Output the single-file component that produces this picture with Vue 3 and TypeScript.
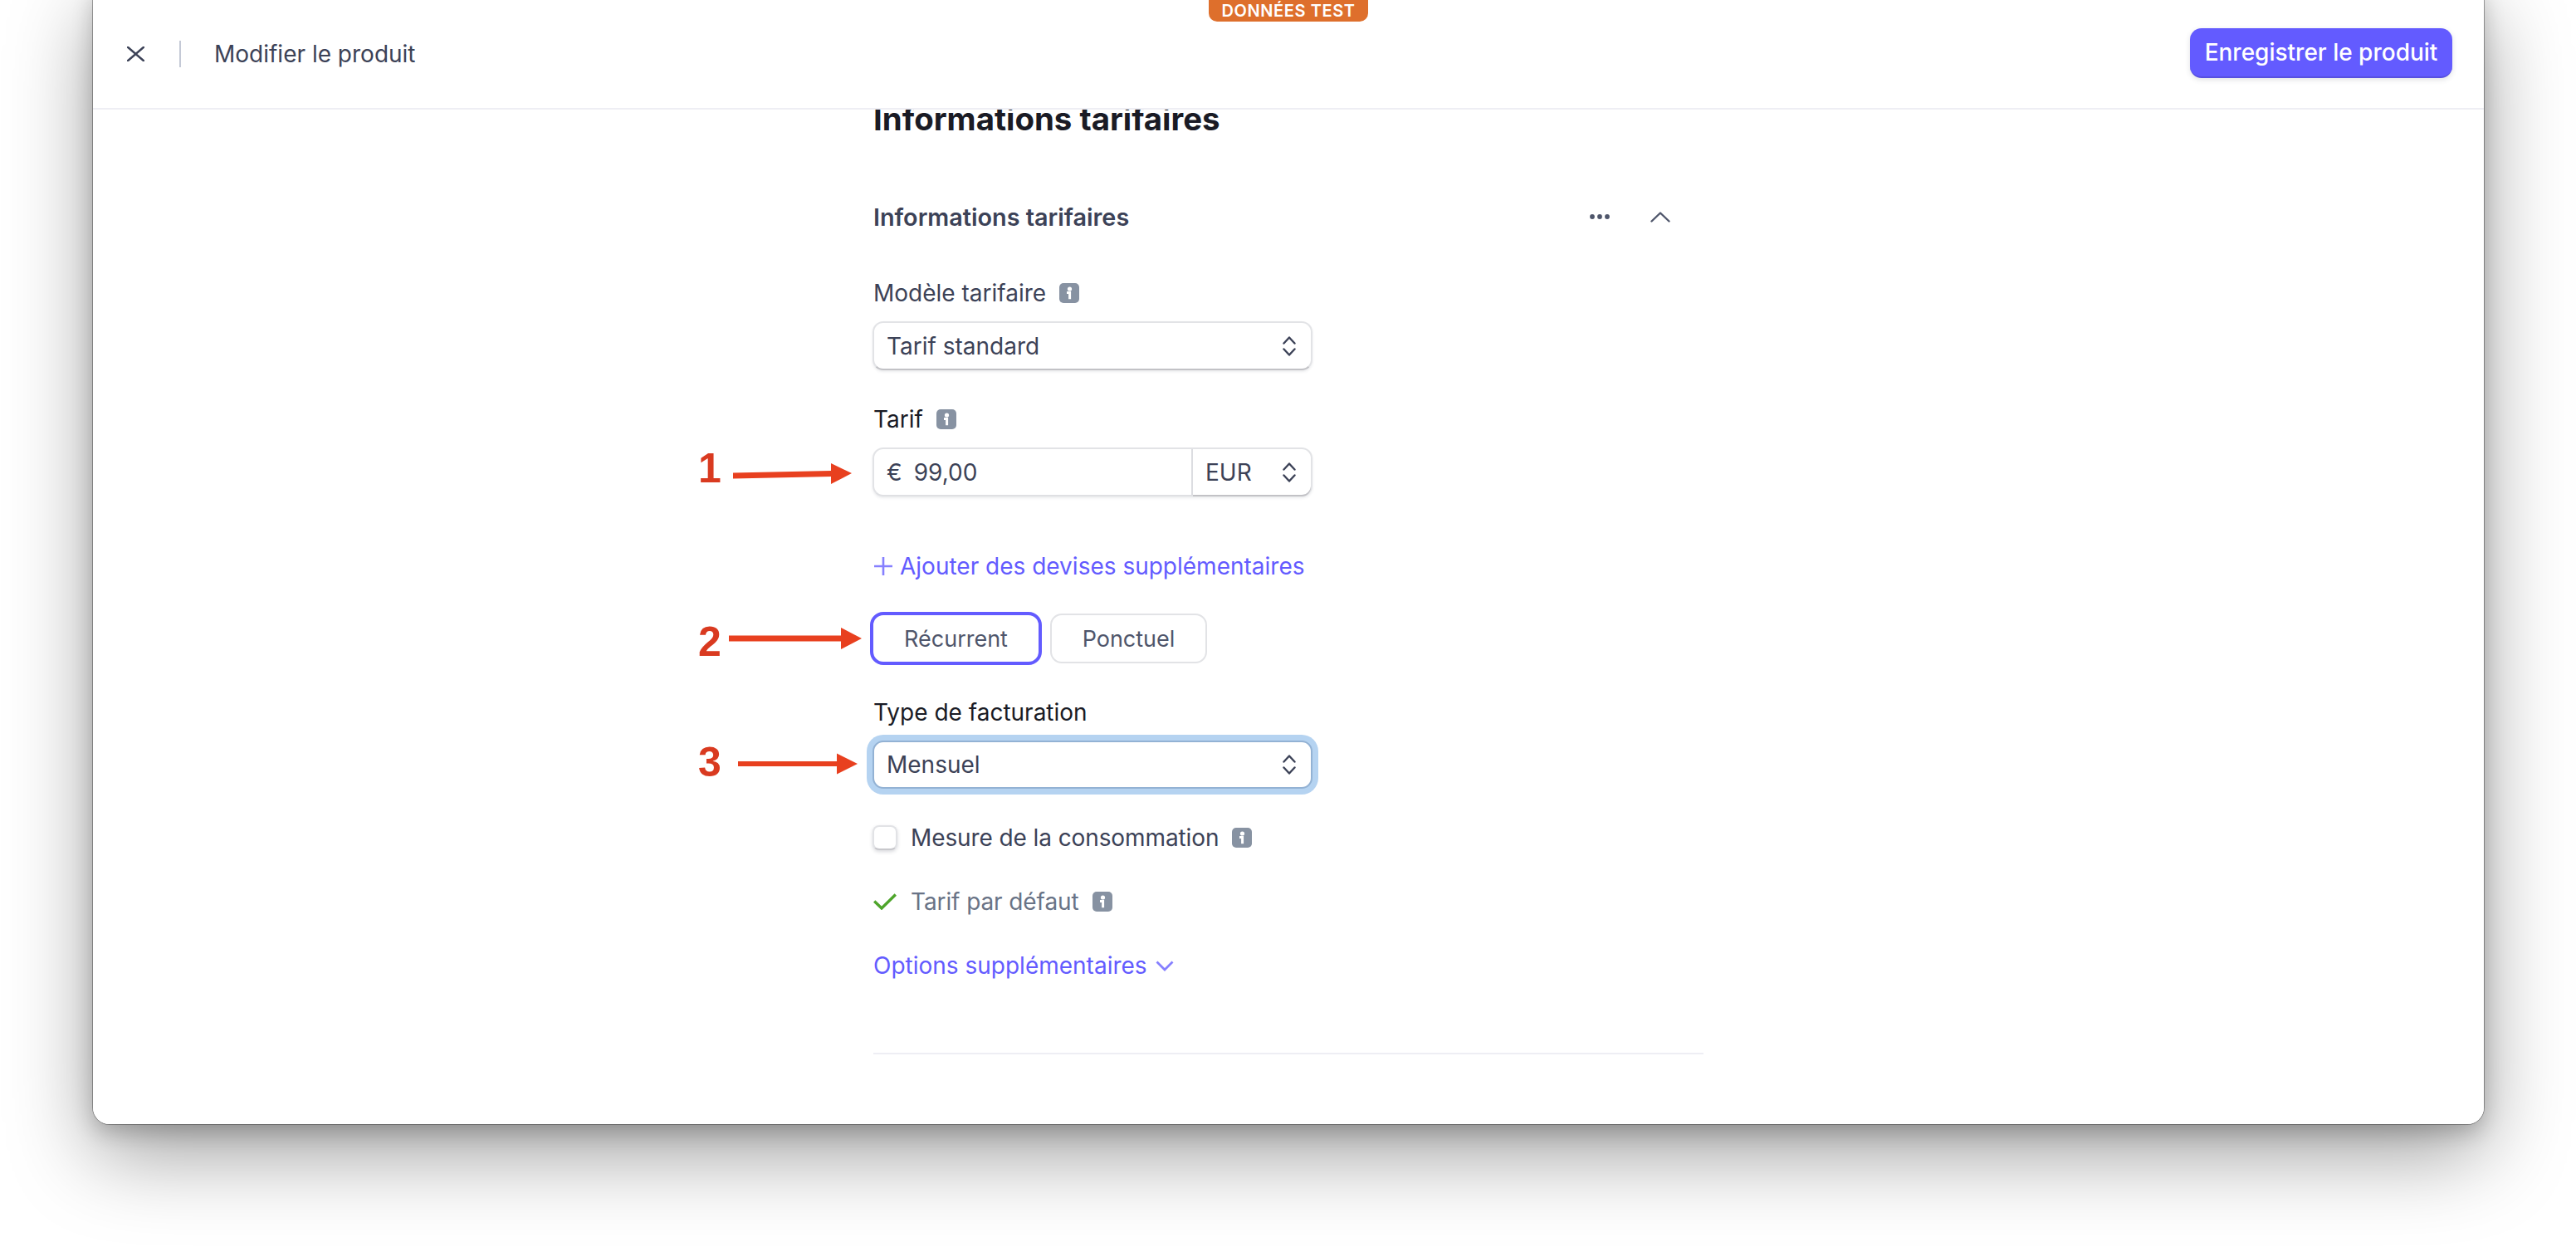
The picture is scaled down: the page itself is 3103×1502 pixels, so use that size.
<template>
  <div class="page">
    <div class="window">
      <header class="topbar">
        <div class="topbar__left">
          <svg class="close" viewBox="0 0 20 20" fill="none" preserveAspectRatio="none">
            <path d="M1 1l18 18M19 1L1 19" stroke="#3c4257" stroke-width="2.5" stroke-linecap="round" />
          </svg>
          <span class="topbar__sep"></span>
          <span class="topbar__title">Modifier le produit</span>
        </div>
        <span class="test-badge">DONNÉES TEST</span>
        <button class="save">Enregistrer le produit</button>
      </header>

      <main class="body">
        <div class="form">
          <h1 class="form__title">Informations tarifaires</h1>

          <div class="section-head">
            <h2>Informations tarifaires</h2>
            <div class="section-head__tools">
              <svg class="dots" viewBox="0 0 24 6"><circle cx="3" cy="3" r="2.9" /><circle cx="12" cy="3" r="2.9" /><circle cx="21" cy="3" r="2.9" /></svg>
              <svg class="chev-up" viewBox="0 0 24 13" fill="none">
                <path d="M1.5 11.5L12 1.5l10.5 10" stroke="#4f566b" stroke-width="2.4" stroke-linecap="round" stroke-linejoin="round" />
              </svg>
            </div>
          </div>

          <div class="label label--first">
            Modèle tarifaire
            <svg class="info" viewBox="0 0 24 24"><rect width="24" height="24" rx="5" fill="#8792a2" /><circle cx="12.5" cy="7" r="2.6" fill="#fff" /><path d="M9 11.6h3.6v7.6" fill="none" stroke="#fff" stroke-width="3" /></svg>
          </div>
          <div class="select">
            <span>Tarif standard</span>
            <svg class="updown" viewBox="0 0 16 24" fill="none"><path d="M1.5 8.5L8 1.5l6.5 7M1.5 15.5L8 22.5l6.5-7" stroke="#3c4257" stroke-width="2.4" stroke-linecap="round" stroke-linejoin="round" /></svg>
          </div>

          <div class="label label--dark label--tarif">
            Tarif
            <svg class="info" viewBox="0 0 24 24"><rect width="24" height="24" rx="5" fill="#8792a2" /><circle cx="12.5" cy="7" r="2.6" fill="#fff" /><path d="M9 11.6h3.6v7.6" fill="none" stroke="#fff" stroke-width="3" /></svg>
          </div>
          <div class="select select--price">
            <div class="price__amount"><span class="price__cur">€</span><span>99,00</span></div>
            <div class="price__unit">
              <span>EUR</span>
              <svg class="updown" viewBox="0 0 16 24" fill="none"><path d="M1.5 8.5L8 1.5l6.5 7M1.5 15.5L8 22.5l6.5-7" stroke="#3c4257" stroke-width="2.4" stroke-linecap="round" stroke-linejoin="round" /></svg>
            </div>
          </div>

          <div class="link link--add">
            <svg class="plus" viewBox="0 0 22 22" fill="none"><path d="M11 0v22M0 11h22" stroke="#8680ff" stroke-width="2.6" /></svg>
            <span>Ajouter des devises supplémentaires</span>
          </div>

          <div class="toggle">
            <span class="toggle__item toggle__item--on">Récurrent</span>
            <span class="toggle__item">Ponctuel</span>
          </div>

          <div class="label label--dark label--type">Type de facturation</div>
          <div class="select select--focus">
            <span>Mensuel</span>
            <svg class="updown" viewBox="0 0 16 24" fill="none"><path d="M1.5 8.5L8 1.5l6.5 7M1.5 15.5L8 22.5l6.5-7" stroke="#3c4257" stroke-width="2.4" stroke-linecap="round" stroke-linejoin="round" /></svg>
          </div>

          <div class="row row--check">
            <span class="checkbox"></span>
            <span>Mesure de la consommation</span>
            <svg class="info" viewBox="0 0 24 24"><rect width="24" height="24" rx="5" fill="#8792a2" /><circle cx="12.5" cy="7" r="2.6" fill="#fff" /><path d="M9 11.6h3.6v7.6" fill="none" stroke="#fff" stroke-width="3" /></svg>
          </div>
          <div class="row row--default">
            <svg class="tick" viewBox="0 0 28 20" fill="none"><path d="M1.2 9.5L10 18 26.8 1.5" stroke="#4ea52b" stroke-width="3.4" /></svg>
            <span>Tarif par défaut</span>
            <svg class="info" viewBox="0 0 24 24"><rect width="24" height="24" rx="5" fill="#8792a2" /><circle cx="12.5" cy="7" r="2.6" fill="#fff" /><path d="M9 11.6h3.6v7.6" fill="none" stroke="#fff" stroke-width="3" /></svg>
          </div>

          <div class="link link--options">
            <span>Options supplémentaires</span>
            <svg class="chev-down" viewBox="0 0 22 13" fill="none"><path d="M1.5 1.5L11 11l9.5-9.5" stroke="#8680ff" stroke-width="2.8" /></svg>
          </div>

          <hr class="rule" />
        </div>
      </main>
    </div>

    <!-- annotations drawn on top of the screenshot -->
    <span v-for="n in notes" :key="n.label" class="note" :style="{ left: n.x + 'px', top: n.y + 'px' }">{{ n.label }}</span>
    <svg class="arrows" viewBox="0 0 3103 1502" fill="#e8401f">
      <path d="M883 569.5L1001 567V558L1026 570 1001 583V574L883 576.5Z" />
      <path d="M878 765.5H1013V756L1038 769 1013 782V772.5H878Z" />
      <path d="M889 917H1008V907.5L1033 920 1008 932.5V923H889Z" />
    </svg>
  </div>
</template>

<script setup lang="ts">
const notes = [
  { label: '1', x: 841, y: 536 },
  { label: '2', x: 841, y: 745 },
  { label: '3', x: 841, y: 890 }
]
</script>

<style>
html,
body {
  margin: 0;
  background: #ffffff;
}
</style>

<style scoped>
.page {
  position: relative;
  width: 3103px;
  height: 1502px;
  overflow: hidden;
  font-family: Inter, "Liberation Sans", sans-serif;
  color: #3c4257;
}

.window {
  position: relative;
  display: flex;
  flex-direction: column;
  width: 2880px;
  height: 1374px;
  margin: -20px 0 0 112px;
  border-radius: 20px;
  background: #ffffff;
  border-top: 4px solid #e56f2c;
  box-sizing: border-box;
  overflow: hidden;
}

.page::before {
  content: "";
  position: absolute;
  left: 112px;
  top: -20px;
  width: 2880px;
  height: 1374px;
  border-radius: 20px;
  box-shadow:
    0 0 0 1px rgba(0, 0, 0, 0.32),
    0 10px 26px rgba(0, 0, 0, 0.2),
    0 36px 100px rgba(0, 0, 0, 0.38);
}

.topbar {
  position: relative;
  z-index: 1;
  flex: none;
  display: flex;
  align-items: center;
  justify-content: space-between;
  height: 130px;
  margin-top: 16px;
  padding: 0 38px 0 41px;
  background: #ffffff;
  border-bottom: 2px solid #eeeef4;
}

.topbar__left {
  display: flex;
  align-items: center;
}

.close {
  width: 21px;
  height: 18px;
}

.topbar__sep {
  width: 2px;
  height: 32px;
  margin: 0 40px 0 42px;
  background: #c4c9d6;
}

.topbar__title {
  font-size: 28px;
}

.test-badge {
  position: absolute;
  left: 1344px;
  top: -16px;
  width: 192px;
  height: 42px;
  padding-top: 16px;
  box-sizing: border-box;
  border-radius: 0 0 10px 10px;
  background: #de6f2c;
  color: #ffffff;
  font-size: 20px;
  line-height: 26px;
  font-weight: 600;
  letter-spacing: 0.6px;
  text-align: center;
}

.save {
  width: 316px;
  height: 60px;
  margin-bottom: 2px;
  padding: 0;
  border: 0;
  border-bottom: 2px solid #5750e0;
  border-radius: 14px;
  background: #635bff;
  box-shadow: 0 2px 6px rgba(60, 66, 87, 0.16);
  color: #ffffff;
  font-family: inherit;
  font-size: 28px;
  font-weight: 500;
}

.body {
  flex: 1;
  overflow: hidden;
}

.form {
  width: 1000px;
  margin: 0 auto;
}

.form__title {
  margin: -13px 0 0;
  font-size: 38.4px;
  line-height: 48px;
  font-weight: 700;
  color: #1a1b25;
}

.section-head {
  display: flex;
  align-items: center;
  justify-content: space-between;
  height: 40px;
  margin-top: 74px;
}

.section-head h2 {
  margin: 0;
  font-size: 28.8px;
  font-weight: 600;
  color: #3c4257;
}

.section-head__tools {
  display: flex;
  align-items: center;
  gap: 49px;
  margin-right: 40px;
}

.dots {
  width: 24px;
  height: 6px;
  fill: #4f566b;
}

.chev-up {
  width: 24px;
  height: 13px;
}

.label {
  display: flex;
  align-items: center;
  gap: 16px;
  height: 32px;
  font-size: 28px;
  color: #3c4257;
}

.label--first {
  margin-top: 56px;
}

.label--dark {
  color: #1a1b25;
}

.label--tarif {
  margin-top: 43px;
}

.label--type {
  margin-top: 41px;
}

.info {
  flex: none;
  width: 24px;
  height: 24px;
}

.select {
  display: flex;
  align-items: center;
  justify-content: space-between;
  box-sizing: border-box;
  width: 530px;
  height: 59px;
  margin: 18px 0 0 -1px;
  padding: 0 18px 0 15px;
  border: 2px solid #e2e3e6;
  border-bottom-color: #c2c2c6;
  border-radius: 13px;
  background: #ffffff;
  font-size: 28px;
  box-shadow: 0 2px 3px rgba(60, 66, 87, 0.1);
}

.updown {
  flex: none;
  width: 16px;
  height: 24px;
}

.select--price {
  padding: 0;
  align-items: stretch;
  border-bottom-color: #dfe0e3;
}

.price__amount {
  display: flex;
  align-items: center;
  gap: 14px;
  width: 384px;
  padding-left: 15px;
  box-sizing: border-box;
  border-right: 2px solid #dcdde1;
}

.price__unit {
  flex: 1;
  display: flex;
  align-items: center;
  justify-content: space-between;
  padding: 0 18px 0 15px;
  border-radius: 0 0 11px 0;
  box-shadow: 0 2px 0 #c2c2c6;
}

.link {
  display: flex;
  align-items: center;
  font-size: 28px;
  color: #635bff;
}

.link--add {
  gap: 9px;
  height: 34px;
  margin-top: 67px;
}

.plus {
  width: 22px;
  height: 22px;
  margin-left: 1px;
}

.toggle {
  display: flex;
  align-items: center;
  gap: 10px;
  margin: 38px 0 0 -4px;
}

.toggle__item {
  display: flex;
  align-items: center;
  justify-content: center;
  box-sizing: border-box;
  width: 189px;
  height: 60px;
  border: 2px solid #e2e3e6;
  border-radius: 14px;
  font-size: 27px;
  color: #4f566b;
}

.toggle__item--on {
  width: 207px;
  height: 64px;
  border: 4px solid #635bff;
  border-radius: 16px;
}

.select--focus {
  height: 58px;
  border-color: #93b2d4;
  box-shadow: 0 0 0 7px #b5d3f1;
}

.row {
  display: flex;
  align-items: center;
  gap: 16px;
  height: 32px;
  font-size: 28px;
  letter-spacing: -0.1px;
}

.row--check {
  margin-top: 43px;
}

.checkbox {
  box-sizing: border-box;
  width: 30px;
  height: 30px;
  margin-left: -1px;
  border: 2px solid #e2e3e6;
  border-bottom-color: #c8c8cc;
  border-radius: 8px;
  background: #ffffff;
  box-shadow: 0 2px 4px rgba(60, 66, 87, 0.2);
}

.row--default {
  margin-top: 45px;
  color: #697386;
}

.tick {
  width: 28px;
  height: 20px;
  margin-right: 1px;
}

.link--options {
  gap: 10px;
  height: 34px;
  margin-top: 44px;
}

.chev-down {
  width: 22px;
  height: 13px;
}

.rule {
  height: 2px;
  margin: 88px 0 0;
  border: 0;
  background: #eeeef4;
}

.note {
  position: absolute;
  font-family: "Liberation Sans", Arial, sans-serif;
  font-size: 50px;
  line-height: 56px;
  font-weight: 700;
  color: #d93a20;
}

.arrows {
  position: absolute;
  left: 0;
  top: 0;
  width: 3103px;
  height: 1502px;
  pointer-events: none;
}
</style>
